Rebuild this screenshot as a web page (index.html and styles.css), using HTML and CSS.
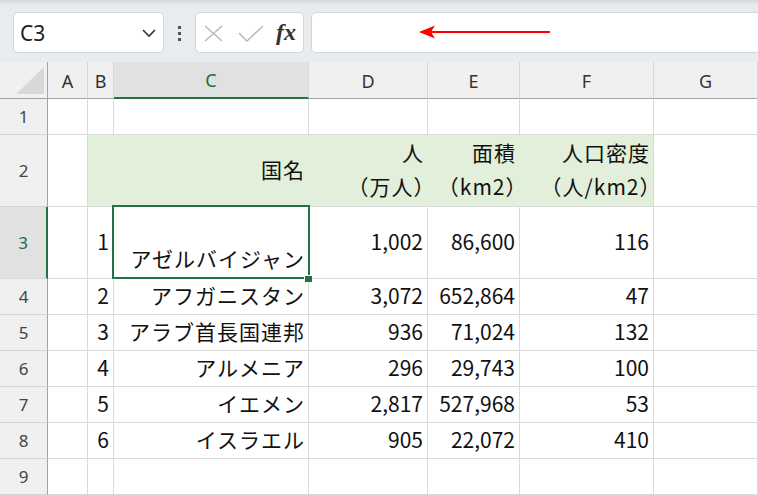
FILE: index.html
```html
<!DOCTYPE html>
<html lang="ja">
<head>
<meta charset="utf-8">
<link rel="stylesheet" href="styles.css">
</head>
<body>
<div class="toolbar">
  <div class="namebox">
    <span class="ref">C3</span>
    <svg class="chev" width="14" height="10" viewBox="0 0 14 10"><polyline points="1,2 7,8 13,2" fill="none" stroke="#333" stroke-width="1.6"/></svg>
  </div>
  <div class="dots">
    <svg width="4" height="16" viewBox="0 0 4 16"><rect x="0" y="0" width="3" height="3" fill="#555"/><rect x="0" y="6" width="3" height="3" fill="#555"/><rect x="0" y="12" width="3" height="3" fill="#555"/></svg>
  </div>
  <div class="fxbox">
    <svg class="ico-x" width="19" height="17" viewBox="0 0 19 17"><path d="M1 1 L18 16 M18 1 L1 16" stroke="#b8b8b8" stroke-width="1.5" fill="none"/></svg>
    <svg class="ico-check" width="26" height="17" viewBox="0 0 26 17"><polyline points="1,8 9,16 25,1" fill="none" stroke="#b8b8b8" stroke-width="1.5"/></svg>
    <span class="fx">fx</span>
  </div>
  <div class="formula">
    <svg class="arrow" width="132" height="16" viewBox="0 0 132 16"><line x1="12" y1="7" x2="131" y2="7" stroke="#ff0000" stroke-width="2.2"/><polygon points="0,7 16,0.5 12,7 16,13.5" fill="#ff0000"/></svg>
  </div>
</div>
<div class="sheet">
  <div class="hd corner"><svg width="28" height="27" viewBox="0 0 28 27"><polygon points="0,27 28,27 28,0" fill="#d8d8d8"/></svg></div>
  <div class="hd col">A</div>
  <div class="hd col">B</div>
  <div class="hd col selcol">C</div>
  <div class="hd col">D</div>
  <div class="hd col">E</div>
  <div class="hd col">F</div>
  <div class="hd col">G</div>

  <div class="hd row">1</div>
  <div class="c"></div><div class="c"></div><div class="c"></div><div class="c"></div><div class="c"></div><div class="c"></div><div class="c"></div>

  <div class="hd row">2</div>
  <div class="c"></div>
  <div class="c g"></div>
  <div class="c g"><span class="jp">国名</span></div>
  <div class="c g"><span class="jp">人<br>（万人<span class="cp">）</span></span></div>
  <div class="c g"><span class="jp">面積<br>（km2<span class="cp">）</span></span></div>
  <div class="c g gl"><span class="jp">人口密度<br>（人/km2<span class="cp">）</span></span></div>
  <div class="c"></div>

  <div class="hd row selrow">3</div>
  <div class="c"></div>
  <div class="c"><span>1</span></div>
  <div class="c active"><span class="jp"><br>アゼルバイジャン</span></div>
  <div class="c"><span>1,002</span></div>
  <div class="c"><span>86,600</span></div>
  <div class="c"><span>116</span></div>
  <div class="c"></div>

  <div class="hd row">4</div>
  <div class="c"></div>
  <div class="c"><span>2</span></div>
  <div class="c"><span class="jp">アフガニスタン</span></div>
  <div class="c"><span>3,072</span></div>
  <div class="c"><span>652,864</span></div>
  <div class="c"><span>47</span></div>
  <div class="c"></div>

  <div class="hd row">5</div>
  <div class="c"></div>
  <div class="c"><span>3</span></div>
  <div class="c"><span class="jp">アラブ首長国連邦</span></div>
  <div class="c"><span>936</span></div>
  <div class="c"><span>71,024</span></div>
  <div class="c"><span>132</span></div>
  <div class="c"></div>

  <div class="hd row">6</div>
  <div class="c"></div>
  <div class="c"><span>4</span></div>
  <div class="c"><span class="jp">アルメニア</span></div>
  <div class="c"><span>296</span></div>
  <div class="c"><span>29,743</span></div>
  <div class="c"><span>100</span></div>
  <div class="c"></div>

  <div class="hd row">7</div>
  <div class="c"></div>
  <div class="c"><span>5</span></div>
  <div class="c"><span class="jp">イエメン</span></div>
  <div class="c"><span>2,817</span></div>
  <div class="c"><span>527,968</span></div>
  <div class="c"><span>53</span></div>
  <div class="c"></div>

  <div class="hd row">8</div>
  <div class="c"></div>
  <div class="c"><span>6</span></div>
  <div class="c"><span class="jp">イスラエル</span></div>
  <div class="c"><span>905</span></div>
  <div class="c"><span>22,072</span></div>
  <div class="c"><span>410</span></div>
  <div class="c"></div>

  <div class="hd row">9</div>
  <div class="c"></div><div class="c"></div><div class="c"></div><div class="c"></div><div class="c"></div><div class="c"></div><div class="c"></div>
</div>
</body>
</html>
```
FILE: styles.css
```css
html, body {
  margin: 0;
  padding: 0;
}
body {
  width: 758px;
  height: 495px;
  overflow: hidden;
  background: #fff;
  font-family: "Noto Sans CJK JP", "Noto Sans", sans-serif;
}
.toolbar {
  height: 62px;
  box-sizing: border-box;
  padding: 12px 0 0 13px;
  display: flex;
  align-items: flex-start;
  background: linear-gradient(#d3d6da 0, #e9ecef 5px, #e9ecef 100%);
  overflow: hidden;
}
.namebox {
  flex: 0 0 151px;
  height: 41px;
  box-sizing: border-box;
  background: #fff;
  border: 1px solid #d3d5d8;
  border-radius: 5px;
  display: flex;
  align-items: center;
  justify-content: space-between;
  padding: 0 7px 0 6px;
}
.ref {
  font-family: "Noto Sans", sans-serif;
  font-size: 21px;
  color: #222;
  line-height: 1;
  margin-top: 2px;
}
.chev {
  margin-top: 1px;
}
.dots {
  flex: 0 0 31px;
  height: 41px;
  display: flex;
  align-items: center;
  justify-content: center;
}
.dots svg {
  margin-left: 1px;
  margin-top: 3px;
}
.fxbox {
  flex: 0 0 109px;
  height: 41px;
  box-sizing: border-box;
  background: #fff;
  border: 1px solid #d3d5d8;
  border-radius: 5px;
  display: flex;
  align-items: center;
  padding-left: 8px;
}
.ico-x {
  margin-top: 2px;
}
.ico-check {
  margin-left: 15px;
  margin-top: 2px;
}
.fx {
  margin-left: 12px;
  font-family: "Liberation Serif", serif;
  font-style: italic;
  font-weight: bold;
  font-size: 24px;
  color: #333;
  line-height: 1;
  margin-top: -1px;
}
.formula {
  flex: 0 0 480px;
  margin-left: 7px;
  height: 41px;
  box-sizing: border-box;
  background: #fff;
  border: 1px solid #d3d5d8;
  border-radius: 5px;
  display: flex;
  align-items: center;
  padding-left: 107px;
}

.sheet {
  display: grid;
  grid-template-columns: 48px 40px 26px 195px 119px 92px 134px 1fr;
  grid-template-rows: 37px 36px 72px 72px 36px 36px 36px 36px 36px 36px;
}
.hd {
  box-sizing: border-box;
  background: #f0f0f0;
  font-family: "Noto Sans", sans-serif;
  font-size: 18px;
  color: #444;
  display: flex;
  align-items: center;
  justify-content: center;
}
.col {
  border-right: 1px solid #d6d6d6;
  border-bottom: 1px solid #a3a3a3;
  color: #333;
  padding-top: 1px;
}
.corner {
  border-right: 1px solid #a3a3a3;
  border-bottom: 1px solid #a3a3a3;
  justify-content: flex-end;
  align-items: flex-end;
  padding: 0 3px 4px 0;
}
.corner svg {
  display: block;
}
.row {
  border-right: 1px solid #a3a3a3;
  border-bottom: 1px solid #d6d6d6;
  font-size: 17px;
}
.selcol {
  background: #e1e1e1;
  color: #1e6b41;
  border-bottom: 2px solid #217346;
}
.selrow {
  background: #e1e1e1;
  color: #1e6b41;
  border-right: 2px solid #217346;
}
.c {
  box-sizing: border-box;
  border-right: 1px solid #dadada;
  border-bottom: 1px solid #dadada;
  display: flex;
  align-items: center;
  justify-content: flex-end;
  text-align: right;
  padding: 0 4px 3px 0;
  font-size: 21px;
  line-height: 34px;
  color: #111;
  white-space: nowrap;
}
.c span {
  display: block;
}
.c .jp {
  letter-spacing: 1px;
  margin-right: -1px;
}
.c .cp {
  display: inline;
  font-feature-settings: "halt" 1;
  letter-spacing: 0;
}
.g {
  background: #e2efda;
  border-right-color: #e2efda;
}
.gl {
  border-right-color: #dadada;
}
.active {
  position: relative;
}
.active::before {
  content: "";
  position: absolute;
  left: -2px;
  top: -2px;
  width: 198px;
  height: 74px;
  box-sizing: border-box;
  border: 2px solid #217346;
}
.active::after {
  content: "";
  position: absolute;
  left: 190px;
  top: 68px;
  width: 7px;
  height: 6px;
  background: #217346;
  border-left: 1px solid #fff;
  border-top: 1px solid #fff;
}
```
